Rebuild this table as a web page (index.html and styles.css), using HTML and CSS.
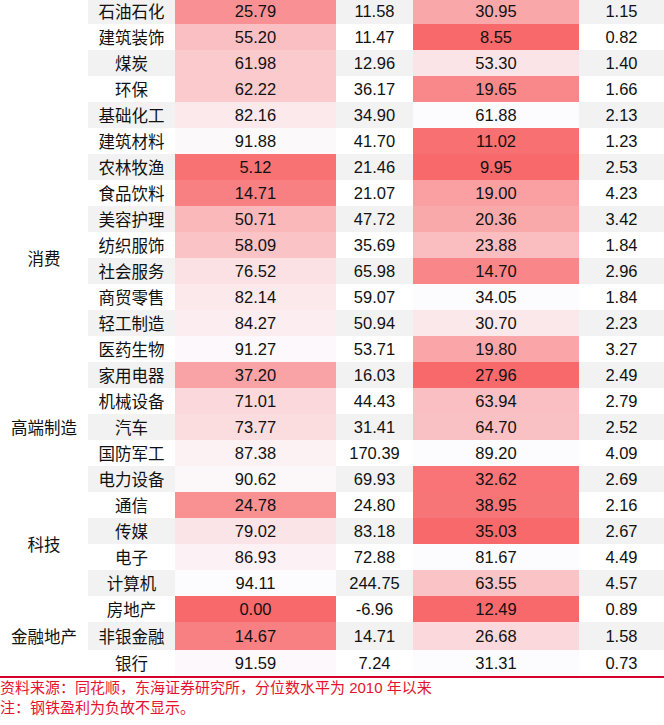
FILE: index.html
```html
<!DOCTYPE html>
<html lang="zh-CN">
<head>
<meta charset="utf-8">
<title>行业估值分位</title>
<link rel="stylesheet" href="styles.css">
</head>
<body>
<div class="page">
  <div class="table">
    <div class="cat g1"></div>
    <div class="cat g2">消费</div>
    <div class="cat g3">高端制造</div>
    <div class="cat g4">科技</div>
    <div class="cat g5">金融地产</div>

    <div class="ind alt">石油石化</div><div class="heat" style="background:rgb(249,145,148)">25.79</div><div class="num alt">11.58</div><div class="heat" style="background:rgb(250,167,169)">30.95</div><div class="num alt">1.15</div>
    <div class="ind">建筑装饰</div><div class="heat" style="background:rgb(250,191,194)">55.20</div><div class="num">11.47</div><div class="heat" style="background:rgb(248,105,107)">8.55</div><div class="num">0.82</div>
    <div class="ind alt">煤炭</div><div class="heat" style="background:rgb(251,202,204)">61.98</div><div class="num alt">12.96</div><div class="heat" style="background:rgb(251,228,231)">53.30</div><div class="num alt">1.40</div>
    <div class="ind">环保</div><div class="heat" style="background:rgb(251,202,205)">62.22</div><div class="num">36.17</div><div class="heat" style="background:rgb(249,136,138)">19.65</div><div class="num">1.66</div>
    <div class="ind alt">基础化工</div><div class="heat" style="background:rgb(251,233,236)">82.16</div><div class="num alt">34.90</div><div class="heat" style="background:rgb(252,252,255)">61.88</div><div class="num alt">2.13</div>
    <div class="ind">建筑材料</div><div class="heat" style="background:rgb(252,249,251)">91.88</div><div class="num">41.70</div><div class="heat" style="background:rgb(248,112,114)">11.02</div><div class="num">1.23</div>
    <div class="ind alt">农林牧渔</div><div class="heat" style="background:rgb(248,113,115)">5.12</div><div class="num alt">21.46</div><div class="heat" style="background:rgb(248,105,107)">9.95</div><div class="num alt">2.53</div>
    <div class="ind">食品饮料</div><div class="heat" style="background:rgb(249,128,130)">14.71</div><div class="num">21.07</div><div class="heat" style="background:rgb(250,160,163)">19.00</div><div class="num">4.23</div>
    <div class="ind alt">美容护理</div><div class="heat" style="background:rgb(250,184,187)">50.71</div><div class="num alt">47.72</div><div class="heat" style="background:rgb(250,169,171)">20.36</div><div class="num alt">3.42</div>
    <div class="ind">纺织服饰</div><div class="heat" style="background:rgb(250,196,198)">58.09</div><div class="num">35.69</div><div class="heat" style="background:rgb(250,190,193)">23.88</div><div class="num">1.84</div>
    <div class="ind alt">社会服务</div><div class="heat" style="background:rgb(251,225,227)">76.52</div><div class="num alt">65.98</div><div class="heat" style="background:rgb(249,134,136)">14.70</div><div class="num alt">2.96</div>
    <div class="ind">商贸零售</div><div class="heat" style="background:rgb(251,233,236)">82.14</div><div class="num">59.07</div><div class="heat" style="background:rgb(252,252,255)">34.05</div><div class="num">1.84</div>
    <div class="ind alt">轻工制造</div><div class="heat" style="background:rgb(252,237,240)">84.27</div><div class="num alt">50.94</div><div class="heat" style="background:rgb(251,232,234)">30.70</div><div class="num alt">2.23</div>
    <div class="ind">医药生物</div><div class="heat" style="background:rgb(252,248,251)">91.27</div><div class="num">53.71</div><div class="heat" style="background:rgb(250,165,168)">19.80</div><div class="num">3.27</div>
    <div class="ind alt">家用电器</div><div class="heat" style="background:rgb(250,163,166)">37.20</div><div class="num alt">16.03</div><div class="heat" style="background:rgb(248,105,107)">27.96</div><div class="num alt">2.49</div>
    <div class="ind">机械设备</div><div class="heat" style="background:rgb(251,216,219)">71.01</div><div class="num">44.43</div><div class="heat" style="background:rgb(250,191,194)">63.94</div><div class="num">2.79</div>
    <div class="ind alt">汽车</div><div class="heat" style="background:rgb(251,220,223)">73.77</div><div class="num alt">31.41</div><div class="heat" style="background:rgb(250,193,196)">64.70</div><div class="num alt">2.52</div>
    <div class="ind">国防军工</div><div class="heat" style="background:rgb(252,242,244)">87.38</div><div class="num">170.39</div><div class="heat" style="background:rgb(252,252,255)">89.20</div><div class="num">4.09</div>
    <div class="ind alt">电力设备</div><div class="heat" style="background:rgb(252,247,249)">90.62</div><div class="num alt">69.93</div><div class="heat" style="background:rgb(248,116,118)">32.62</div><div class="num alt">2.69</div>
    <div class="ind">通信</div><div class="heat" style="background:rgb(249,144,146)">24.78</div><div class="num">24.80</div><div class="heat" style="background:rgb(248,117,119)">38.95</div><div class="num">2.16</div>
    <div class="ind alt">传媒</div><div class="heat" style="background:rgb(251,228,231)">79.02</div><div class="num alt">83.18</div><div class="heat" style="background:rgb(248,105,107)">35.03</div><div class="num alt">2.67</div>
    <div class="ind">电子</div><div class="heat" style="background:rgb(252,241,244)">86.93</div><div class="num">72.88</div><div class="heat" style="background:rgb(252,252,255)">81.67</div><div class="num">4.49</div>
    <div class="ind alt">计算机</div><div class="heat" style="background:rgb(252,252,255)">94.11</div><div class="num alt">244.75</div><div class="heat" style="background:rgb(250,195,198)">63.55</div><div class="num alt">4.57</div>
    <div class="ind">房地产</div><div class="heat" style="background:rgb(248,105,107)">0.00</div><div class="num">-6.96</div><div class="heat" style="background:rgb(248,105,107)">12.49</div><div class="num">0.89</div>
    <div class="ind alt">非银金融</div><div class="heat" style="background:rgb(249,128,130)">14.67</div><div class="num alt">14.71</div><div class="heat" style="background:rgb(251,216,219)">26.68</div><div class="num alt">1.58</div>
    <div class="ind">银行</div><div class="heat" style="background:rgb(252,248,251)">91.59</div><div class="num">7.24</div><div class="heat" style="background:rgb(252,252,255)">31.31</div><div class="num">0.73</div>
  </div>
  <div class="notes">
    <p>资料来源：同花顺，东海证券研究所，分位数水平为 2010 年以来</p>
    <p>注：钢铁盈利为负故不显示。</p>
  </div>
</div>
</body>
</html>
```

FILE: styles.css
```css
html, body {
  margin: 0;
  padding: 0;
  background: #ffffff;
}

.page {
  width: 664px;
  overflow: hidden;
  font-family: "Liberation Sans", "Noto Sans CJK SC", sans-serif;
  color: #111111;
}

.table {
  display: grid;
  grid-template-columns: 88px 87px 161px 77px 166px 1fr;
  grid-template-rows: repeat(24, 26px) 28px 26px;
  margin-top: -2px;
  font-size: 16.5px;
  border-bottom: 2px solid #d7002a;
}

.table > div {
  display: flex;
  align-items: center;
  justify-content: center;
  white-space: nowrap;
}

.cat {
  grid-column: 1;
  background: #ffffff;
}

.g1 { grid-row: 1 / span 6; }
.g2 { grid-row: 7 / span 8; }
.g3 { grid-row: 15 / span 5; }
.g4 { grid-row: 20 / span 4; }
.g5 { grid-row: 24 / span 3; }

.ind,
.num {
  background: #ffffff;
}

.ind.alt,
.num.alt {
  background: #f2f2f2;
}

.notes {
  padding-top: 0;
  font-size: 15px;
  line-height: 20px;
  color: #e5122f;
}

.notes p {
  margin: 0;
  white-space: nowrap;
}
```
